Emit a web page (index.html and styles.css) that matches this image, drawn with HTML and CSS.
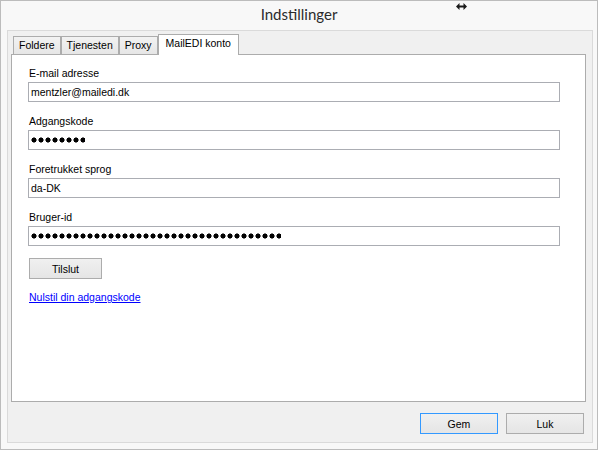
FILE: index.html
```html
<!DOCTYPE html>
<html lang="da">
<head>
<meta charset="utf-8">
<title>Indstillinger</title>
<link rel="stylesheet" href="styles.css">
</head>
<body>
<div class="window">
  <div class="titlebar"><span class="title">Indstillinger</span></div>
  <svg class="cursor" width="11" height="7" viewBox="0 0 11 7"><path d="M0 3.5 L3.5 0 V2.5 H7.5 V0 L11 3.5 L7.5 7 V4.5 H3.5 V7 Z" fill="#1a1a1a"/></svg>
  <div class="client">
    <div class="tabs">
      <div class="tab">Foldere</div>
      <div class="tab">Tjenesten</div>
      <div class="tab">Proxy</div>
      <div class="tab active">MailEDI konto</div>
    </div>
    <div class="panel">
      <div class="fields">
        <div class="field">
          <div class="label">E-mail adresse</div>
          <div class="textbox">mentzler@mailedi.dk</div>
        </div>
        <div class="field">
          <div class="label">Adgangskode</div>
          <div class="textbox"><span class="dots" style="width:54px"></span></div>
        </div>
        <div class="field">
          <div class="label">Foretrukket sprog</div>
          <div class="textbox">da-DK</div>
        </div>
        <div class="field">
          <div class="label">Bruger-id</div>
          <div class="textbox"><span class="dots" style="width:250px"></span></div>
        </div>
      </div>
      <button class="btn connect">Tilslut</button>
      <a class="link" href="#">Nulstil din adgangskode</a>
    </div>
    <div class="actions">
      <button class="btn default">Gem</button>
      <button class="btn">Luk</button>
    </div>
  </div>
</div>
</body>
</html>
```
FILE: styles.css
```css
* { box-sizing: border-box; }

body {
  margin: 0;
  background: #ffffff;
  font-family: "Liberation Sans", Arial, sans-serif;
  font-size: 10.5px;
  color: #000;
}

.window {
  position: relative;
  width: 598px;
  height: 450px;
  border: 1px solid #bcbcbc;
  background: #f8f8f8;
  display: flex;
  flex-direction: column;
}

.titlebar {
  height: 29px;
  padding-top: 4px;
  display: flex;
  justify-content: center;
}

.title {
  font-family: Lato, "Liberation Sans", sans-serif;
  font-size: 15px;
  line-height: 18px;
  color: #2b2b2b;
}

.cursor {
  position: absolute;
  left: 455px;
  top: 2px;
}

.client {
  margin: 0 4px 6px 6px;
  height: 413px;
  border: 1px solid #dadada;
  background: #f0f0f0;
  padding: 3px 6px 0 3px;
  display: flex;
  flex-direction: column;
}

.tabs {
  position: relative;
  z-index: 1;
  display: flex;
  align-items: flex-end;
  height: 20px;
  padding-left: 2px;
}

.tab {
  height: 18px;
  border: 1px solid #acacac;
  border-bottom: none;
  background: linear-gradient(#f2f2f2, #e6e6e6);
  padding: 0 5px;
  line-height: 17px;
  white-space: nowrap;
}

.tab.active {
  height: 21px;
  margin-bottom: -1px;
  background: #ffffff;
  padding: 0 7px;
}

.panel {
  height: 348px;
  background: #ffffff;
  border: 1px solid #acacac;
  padding: 12px 0 0 16px;
}

.fields {
  display: flex;
  flex-direction: column;
  gap: 13px;
}

.label {
  line-height: 13px;
  margin-bottom: 2px;
  padding-left: 1px;
}

.textbox {
  width: 532px;
  height: 20px;
  border: 1px solid #abadb3;
  padding-left: 2px;
  line-height: 18px;
  display: flex;
  align-items: center;
}

.dots {
  display: block;
  height: 6px;
  background: radial-gradient(circle at 3px 3px, #000 2.2px, transparent 2.9px) 0 0 / 7px 6px repeat-x;
}

.btn {
  font: inherit;
  color: #000;
  height: 21px;
  width: 78px;
  padding: 0;
  border: 1px solid #acacac;
  border-radius: 0;
  background: linear-gradient(#f0f0f0, #e5e5e5);
}

.btn.default {
  border-color: #3399ff;
}

.connect {
  display: block;
  width: 73px;
  margin: 12px 0 0 1px;
}

.link {
  display: block;
  width: fit-content;
  margin: 12px 0 0 1px;
  line-height: 13px;
  color: #0000ff;
  text-decoration: underline;
}

.actions {
  display: flex;
  justify-content: flex-end;
  gap: 8px;
  padding: 11px 2px 0 0;
}
```
